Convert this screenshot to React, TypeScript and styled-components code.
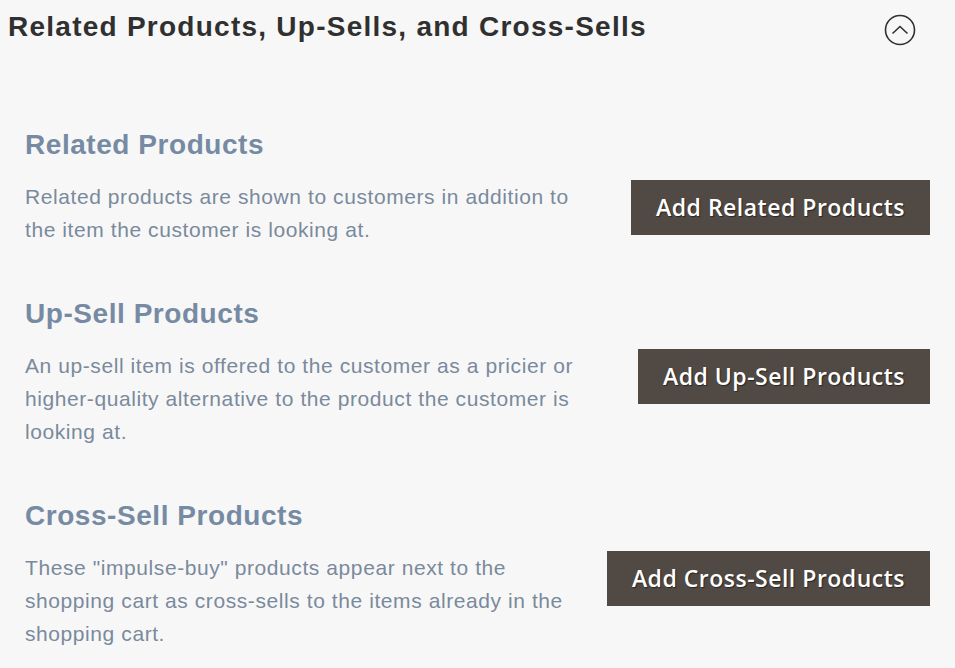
import styled, { createGlobalStyle } from 'styled-components';

const GlobalStyle = createGlobalStyle`
  body {
    margin: 0;
    background: #f7f7f7;
    font-family: 'Liberation Sans', Arial, sans-serif;
  }
`;

const sections = [
  {
    title: 'Related Products',
    text: 'Related products are shown to customers in addition to the item the customer is looking at.',
    button: 'Add Related Products',
  },
  {
    title: 'Up-Sell Products',
    text: 'An up-sell item is offered to the customer as a pricier or higher-quality alternative to the product the customer is looking at.',
    button: 'Add Up-Sell Products',
  },
  {
    title: 'Cross-Sell Products',
    text: 'These "impulse-buy" products appear next to the shopping cart as cross-sells to the items already in the shopping cart.',
    button: 'Add Cross-Sell Products',
  },
];

function App() {
  return (
    <Page>
      <GlobalStyle />
      <Header>
        <Title>Related Products, Up-Sells, and Cross-Sells</Title>
        <Toggle aria-label="Collapse">
          <svg width="32" height="32" viewBox="0 0 32 32">
            <circle cx="16" cy="16" r="14.5" fill="none" stroke="#303030" strokeWidth="1.6" />
            <path d="M8.5 19.5 L16 12.5 L23.5 19.5" fill="none" stroke="#303030" strokeWidth="1.6" />
          </svg>
        </Toggle>
      </Header>
      <Content>
        {sections.map((s) => (
          <Section key={s.title}>
            <SectionTitle>{s.title}</SectionTitle>
            <Row>
              <Description>{s.text}</Description>
              <AddButton>{s.button}</AddButton>
            </Row>
          </Section>
        ))}
      </Content>
    </Page>
  );
}

export default App;

const Page = styled.div`
  width: 100%;
  min-height: 100vh;
  box-sizing: border-box;
`;

const Header = styled.div`
  display: flex;
  align-items: center;
  justify-content: space-between;
  height: 54px;
  padding: 0 39px 0 8px;
`;

const Title = styled.h2`
  margin: 0;
  font-size: 28px;
  letter-spacing: 1.25px;
  font-weight: 700;
  color: #303030;
`;

const Toggle = styled.button`
  display: flex;
  margin-top: 6px;
  padding: 0;
  border: none;
  background: none;
  cursor: pointer;
`;

const Content = styled.div`
  display: flex;
  flex-direction: column;
  gap: 52px;
  padding: 75px 25px 0 25px;
`;

const Section = styled.section`
  display: flex;
  flex-direction: column;
  gap: 19px;
`;

const SectionTitle = styled.h3`
  margin: 0;
  font-size: 28px;
  letter-spacing: 0.55px;
  line-height: 32px;
  font-weight: 700;
  color: #768ba3;
`;

const Row = styled.div`
  display: flex;
  justify-content: space-between;
  align-items: flex-start;
`;

const Description = styled.p`
  margin: 0;
  width: 550px;
  font-size: 21px;
  letter-spacing: 0.58px;
  line-height: 33px;
  color: #7a8a9c;
`;

const AddButton = styled.button`
  height: 55px;
  padding: 0 25px 2px;
  border: none;
  background: #514943;
  color: #fff;
  font-family: 'Open Sans', sans-serif;
  font-size: 23px;
  letter-spacing: 0.5px;
  font-weight: 600;
  text-shadow: 1px 1px 1px rgba(0, 0, 0, 0.5);
  cursor: pointer;
`;
